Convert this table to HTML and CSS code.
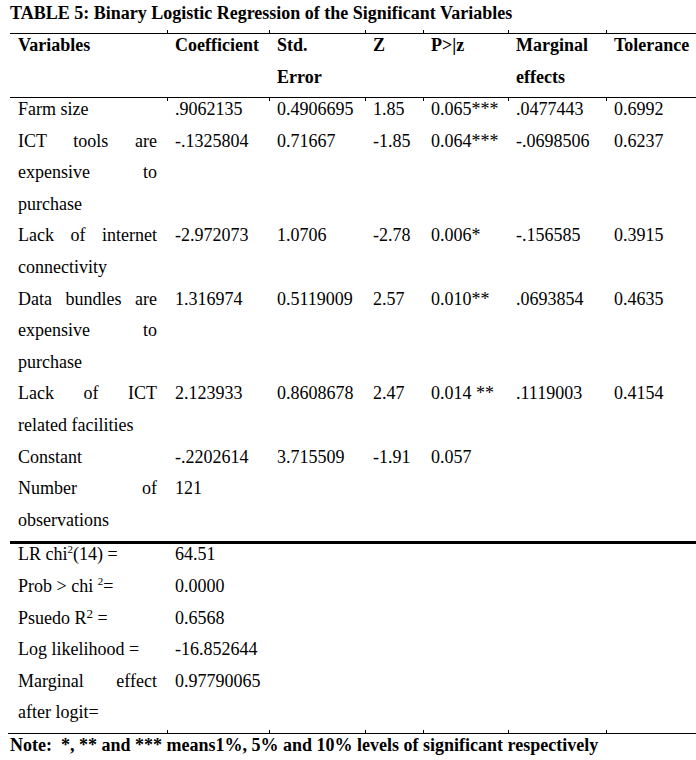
FILE: index.html
```html
<!DOCTYPE html>
<html lang="en">
<head>
<meta charset="utf-8">
<title>Table 5</title>
<link rel="stylesheet" href="styles.css">
</head>
<body>
<div class="page">
  <h1 class="title">TABLE 5: Binary Logistic Regression of the Significant Variables</h1>
  <table class="reg">
    <colgroup>
      <col class="w1"><col class="w2"><col class="w3"><col class="w4"><col class="w5"><col class="w6"><col class="w7">
    </colgroup>
    <thead>
      <tr>
        <th><p>Variables</p></th>
        <th><p>Coefficient</p></th>
        <th><p>Std.<br>Error</p></th>
        <th><p>Z</p></th>
        <th><p>P&gt;|z</p></th>
        <th><p>Marginal<br>effects</p></th>
        <th><p>Tolerance</p></th>
      </tr>
    </thead>
    <tbody class="body">
      <tr class="first">
        <td class="var"><p>Farm size</p></td>
        <td><p>.9062135</p></td>
        <td><p>0.4906695</p></td>
        <td><p>1.85</p></td>
        <td><p>0.065***</p></td>
        <td><p>.0477443</p></td>
        <td><p>0.6992</p></td>
      </tr>
      <tr>
        <td class="var"><p>ICT tools are expensive to purchase</p></td>
        <td><p>-.1325804</p></td>
        <td><p>0.71667</p></td>
        <td><p>-1.85</p></td>
        <td><p>0.064***</p></td>
        <td><p>-.0698506</p></td>
        <td><p>0.6237</p></td>
      </tr>
      <tr>
        <td class="var"><p>Lack of internet connectivity</p></td>
        <td><p>-2.972073</p></td>
        <td><p>1.0706</p></td>
        <td><p>-2.78</p></td>
        <td><p>0.006*</p></td>
        <td><p>-.156585</p></td>
        <td><p>0.3915</p></td>
      </tr>
      <tr>
        <td class="var"><p>Data bundles are expensive to purchase</p></td>
        <td><p>1.316974</p></td>
        <td><p>0.5119009</p></td>
        <td><p>2.57</p></td>
        <td><p>0.010**</p></td>
        <td><p>.0693854</p></td>
        <td><p>0.4635</p></td>
      </tr>
      <tr>
        <td class="var"><p>Lack of ICT related facilities</p></td>
        <td><p>2.123933</p></td>
        <td><p>0.8608678</p></td>
        <td><p>2.47</p></td>
        <td><p>0.014 **</p></td>
        <td><p>.1119003</p></td>
        <td><p>0.4154</p></td>
      </tr>
      <tr>
        <td class="var"><p>Constant</p></td>
        <td><p>-.2202614</p></td>
        <td><p>3.715509</p></td>
        <td><p>-1.91</p></td>
        <td><p>0.057</p></td>
        <td><p></p></td>
        <td><p></p></td>
      </tr>
      <tr>
        <td class="var"><p>Number of observations</p></td>
        <td><p>121</p></td>
        <td><p></p></td>
        <td><p></p></td>
        <td><p></p></td>
        <td><p></p></td>
        <td><p></p></td>
      </tr>
    </tbody>
    <tbody class="stats">
      <tr class="first">
        <td class="var"><p>LR chi<sup>2</sup>(14) =</p></td>
        <td><p>64.51</p></td>
        <td></td><td></td><td></td><td></td><td></td>
      </tr>
      <tr>
        <td class="var"><p>Prob &gt; chi <sup>2</sup>=</p></td>
        <td><p>0.0000</p></td>
        <td></td><td></td><td></td><td></td><td></td>
      </tr>
      <tr>
        <td class="var"><p>Psuedo R<sup class="big">2</sup> =</p></td>
        <td><p>0.6568</p></td>
        <td></td><td></td><td></td><td></td><td></td>
      </tr>
      <tr>
        <td class="var"><p>Log likelihood =</p></td>
        <td><p>-16.852644</p></td>
        <td></td><td></td><td></td><td></td><td></td>
      </tr>
      <tr class="last">
        <td class="var"><p>Marginal effect after logit=</p></td>
        <td><p>0.97790065</p></td>
        <td></td><td></td><td></td><td></td><td></td>
      </tr>
    </tbody>
  </table>
  <p class="note">Note:&nbsp; *, ** and *** means1%, 5% and 10% levels of significant respectively</p>
</div>
</body>
</html>
```

FILE: styles.css
```css
html, body {
  margin: 0;
  padding: 0;
  background: #ffffff;
  overflow: hidden;
}

body {
  width: 696px;
  height: 760px;
  font-family: "Liberation Serif", "Times New Roman", serif;
  font-size: 18px;
  color: #000000;
}

.page {
  padding-left: 8px;
}

.title {
  margin: 2px 0 9px 2px;
  font-size: 18px;
  font-weight: bold;
  line-height: 22px;
}

.reg {
  margin-left: 2px;
  width: 686px;
  table-layout: fixed;
  border-collapse: separate;
  border-spacing: 0;
}

.w1 { width: 157px; }
.w2 { width: 102px; }
.w3 { width: 96px; }
.w4 { width: 58px; }
.w5 { width: 85px; }
.w6 { width: 98px; }
.w7 { width: 90px; }

.reg th,
.reg td {
  position: relative;
  padding: 0 4px 0 8px;
  text-align: left;
  vertical-align: top;
  line-height: 31.6px;
  white-space: nowrap;
}

.reg th {
  font-weight: bold;
  border-top: 1px solid #000000;
  border-bottom: 1px solid #000000;
}

.reg p {
  margin: -4.1px 0 4.1px 0;
}

.reg td.var {
  padding-right: 10px;
  white-space: normal;
  text-align: justify;
}

.stats tr.first td {
  border-top: 3px solid #000000;
}

sup {
  font-size: 11px;
  line-height: 0;
  vertical-align: 7px;
}

sup.big {
  font-size: 13px;
  vertical-align: 6px;
}

/* small cell-edge ticks at the rules */
.reg th + th::before {
  content: "";
  position: absolute;
  left: 0;
  top: -4px;
  width: 1px;
  height: 3px;
  background: #000000;
}

.reg th + th::after {
  content: "";
  position: absolute;
  left: 0;
  bottom: -4px;
  width: 1px;
  height: 3px;
  background: #000000;
}

.stats tr.last td + td::after {
  content: "";
  position: absolute;
  left: 0;
  bottom: 0;
  width: 1px;
  height: 3px;
  background: #000000;
}

.note {
  margin: 0;
  padding: 0 0 0 2px;
  border-top: 1px solid #000000;
  font-weight: bold;
  line-height: 22px;
}
```
